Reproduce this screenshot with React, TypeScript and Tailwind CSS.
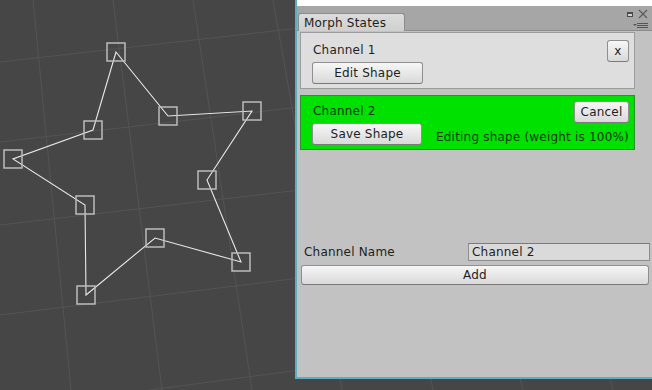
import React from 'react'

// Scene view: perspective grid + star outline with vertex handles
const verticals: [number, number][] = [
  [33, 71], [113, 162], [193, 252], [273, 342], [353, 433], [433, 523], [513, 613], [593, 703]
]
const horizontals: [number, number][] = [
  [62, 28], [142, 107], [225, 190], [315, 278], [410, 370]
]
const starPoints: [number, number][] = [
  [116, 52], [168, 116], [252, 111], [207, 180], [241, 262],
  [155, 238], [86, 295], [85, 205], [13, 159], [93, 130]
]

function SceneView() {
  return (
    <svg className="absolute inset-0" width={652} height={390} viewBox="0 0 652 390">
      {verticals.map(([top, bottom], i) => (
        <line key={'v' + i} x1={top} y1={0} x2={bottom} y2={390} stroke="#545454" strokeWidth={1} />
      ))}
      {horizontals.map(([left, right], i) => (
        <line key={'h' + i} x1={0} y1={left} x2={300} y2={right} stroke="#545454" strokeWidth={1} />
      ))}
      <polygon
        points={starPoints.map(([x, y]) => `${x},${y}`).join(' ')}
        fill="none"
        stroke="#e8e8e8"
        strokeWidth={1.1}
      />
      {starPoints.map(([x, y], i) => (
        <rect key={'p' + i} x={x - 9} y={y - 9} width={18} height={18} fill="none" stroke="#bcbcbc" strokeWidth={1.5} />
      ))}
    </svg>
  )
}

function UnityButton({ label, className = '' }: { label: string; className?: string }) {
  return (
    <button
      className={`flex items-center justify-center rounded-[3px] border border-[#8f8f8f] border-b-[#7a7a7a] bg-gradient-to-b from-[#f7f7f7] to-[#d9d9d9] text-[12px] leading-none text-[#1e1e1e] ${className}`}
    >
      {label}
    </button>
  )
}

function WindowIcons() {
  return (
    <div className="flex flex-col items-end pr-[4px] pt-[3px]">
      <div className="flex items-center gap-[5px]">
        <svg width={6} height={5} viewBox="0 0 6 5">
          <rect x={0} y={0} width={6} height={5} fill="#4a4a4a" />
          <rect x={1} y={2} width={4} height={2} fill="#d0d0d0" />
        </svg>
        <svg width={10} height={10} viewBox="0 0 10 10">
          <path d="M1 1 L9 9 M9 1 L1 9" stroke="#5a5a5a" strokeWidth={1.1} />
        </svg>
      </div>
      <svg className="mt-[4px]" width={15} height={5} viewBox="0 0 15 5">
        <path d="M0 1 L4 1 L2 3 Z" fill="#555" />
        <path d="M4 0.5 H15 M4 2.5 H15 M4 4.5 H15" stroke="#555" strokeWidth={1} />
      </svg>
    </div>
  )
}

function MorphStatesWindow() {
  return (
    <div className="absolute left-[295px] top-0 flex h-[379px] w-[357px] flex-col border-b-2 border-l-2 border-[#5cadbd] font-['DejaVu_Sans',sans-serif] text-[12px] tracking-[0.2px] text-[#1e1e1e]">
      <div className="h-[6px] bg-white" />

      {/* Tab strip */}
      <div className="flex h-[25px] justify-between border-b border-[#8c8c8c] bg-[#a6a6a6]">
        <div className="ml-[1px] mt-[7px] flex h-[19px] w-[107px] items-center rounded-t-[3px] border border-b-0 border-[#8c8c8c] bg-gradient-to-b from-[#dcdcdc] to-[#cfcfcf] pl-[5px] leading-none">
          Morph States
        </div>
        <WindowIcons />
      </div>

      {/* Body */}
      <div className="flex flex-1 flex-col bg-[#c2c2c2]">
        <div className="ml-[3px] mr-[17px] mt-[1px] flex flex-col">
          <div className="flex flex-col border border-[#9c9c9c] bg-[#dedede] pb-[4px] pl-[11px] pr-[5px] pt-[7px]">
            <div className="flex items-start justify-between">
              <span className="pl-[1px] pt-[3px] leading-[15px]">Channel 1</span>
              <UnityButton label="x" className="h-[22px] w-[22px] text-[11px]" />
            </div>
            <UnityButton label="Edit Shape" className="h-[22px] w-[111px]" />
          </div>

          <div className="mt-[6px] flex flex-col border border-[#2e8f2e] bg-[#00e100] pb-[4px] pl-[11px] pr-[5px] pt-[5px] text-[#163516]">
            <div className="flex items-start justify-between">
              <span className="pl-[1px] pt-[3px] leading-[15px]">Channel 2</span>
              <UnityButton label="Cancel" className="h-[22px] w-[55px]" />
            </div>
            <div className="flex items-end">
              <UnityButton label="Save Shape" className="h-[22px] w-[111px]" />
              <span className="ml-[14px] whitespace-nowrap leading-[15px]">Editing shape (weight is 100%)</span>
            </div>
          </div>
        </div>

        <div className="mt-[93px] flex items-center">
          <span className="flex-1 pl-[7px] leading-none">Channel Name</span>
          <div className="mr-[2px] flex h-[18px] w-[182px] items-center border border-[#8e8e8e] border-t-[#7a7a7a] bg-[#dadada] pl-[3px] leading-none">
            Channel 2
          </div>
        </div>
        <UnityButton label="Add" className="ml-[4px] mr-[3px] mt-[4px] h-[20px]" />
      </div>
    </div>
  )
}

export default function App() {
  return (
    <div className="relative h-[390px] w-[652px] overflow-hidden bg-[#464646]">
      <SceneView />
      <MorphStatesWindow />
    </div>
  )
}
